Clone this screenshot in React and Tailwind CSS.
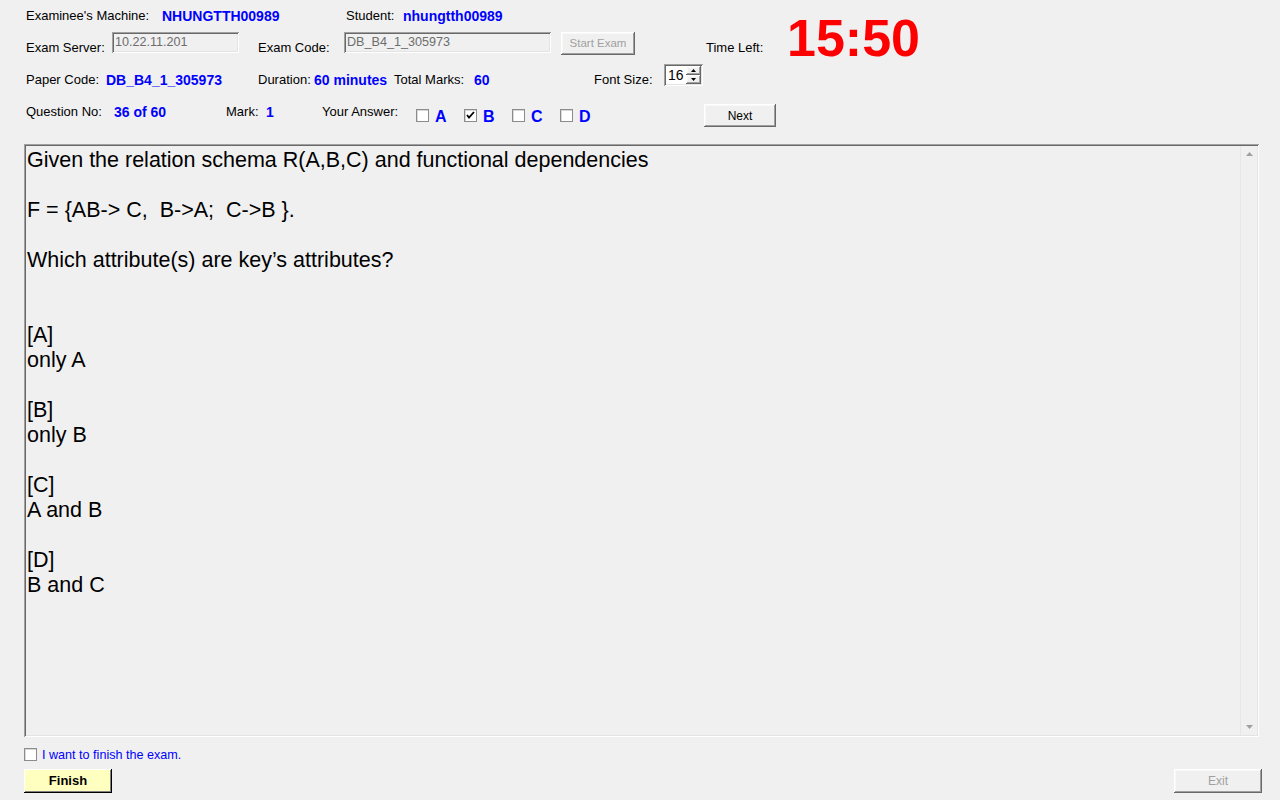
import React from "react";

const F = { fontFamily: '"Liberation Sans", Arial, sans-serif' };

function Label({ w, children, cls = "" }) {
  return (
    <div className={`shrink-0 text-[13px] leading-[16px] text-black whitespace-nowrap ${cls}`} style={w ? { width: w } : undefined}>
      {children}
    </div>
  );
}
function Val({ w, children, cls = "" }) {
  return (
    <div className={`shrink-0 text-[14px] font-bold leading-[16px] text-[#0000ff] whitespace-nowrap ${cls}`} style={w ? { width: w } : undefined}>
      {children}
    </div>
  );
}

function Box({ checked, cls = "" }) {
  return (
    <div className={`shrink-0 w-[13px] h-[13px] bg-white border border-[#8c8c8c] shadow-[inset_1px_1px_#d8d8d8] flex items-center justify-center ${cls}`}>
      {checked && (
        <svg width="9" height="9" viewBox="0 0 9 9">
          <path d="M1 4 L3 6.5 L8 1" fill="none" stroke="#000" strokeWidth="1.8" />
        </svg>
      )}
    </div>
  );
}

const btnShadow =
  "shadow-[inset_-1px_-1px_#696969,inset_1px_1px_#ffffff,inset_-2px_-2px_#a0a0a0,inset_2px_2px_#f8f8f8]";
const sunken =
  "shadow-[inset_1px_1px_#a0a0a0,inset_-1px_-1px_#ffffff,inset_2px_2px_#696969,inset_-2px_-2px_#e3e3e3]";

const LINES = [
  "Given the relation schema R(A,B,C) and functional dependencies",
  "",
  "F = {AB-> C,  B->A;  C->B }.",
  "",
  "Which attribute(s) are key\u2019s attributes?",
  "",
  "",
  "[A]",
  "only A",
  "",
  "[B]",
  "only B",
  "",
  "[C]",
  "A and B",
  "",
  "[D]",
  "B and C",
];

export default function App() {
  return (
    <div className="w-full h-screen bg-[#f0f0f0] overflow-hidden select-none" style={F}>
      {/* header */}
      <div className="flex pt-[8px]">
        <div className="w-[782px] shrink-0 pl-[26px]">
          {/* row 1 */}
          <div className="flex items-center h-[16px]">
            <Label w={136}>Examinee's Machine:</Label>
            <Val w={184}>NHUNGTTH00989</Val>
            <Label w={57}>Student:</Label>
            <Val>nhungtth00989</Val>
          </div>
          {/* row 2 */}
          <div className="flex items-start h-[23px] mt-[8px]">
            <Label w={86} cls="mt-[8px]">Exam Server:</Label>
            <div className={`shrink-0 w-[127px] h-[21px] bg-[#f0f0f0] ${sunken} text-[12.6px] leading-[19px] text-[#6d6d6d] pl-[3px] pt-[1px]`}>
              10.22.11.201
            </div>
            <div className="w-[19px] shrink-0" />
            <Label w={86} cls="mt-[8px]">Exam Code:</Label>
            <div className={`shrink-0 w-[207px] h-[21px] bg-[#f0f0f0] ${sunken} text-[12.6px] leading-[19px] text-[#6d6d6d] pl-[3px] pt-[1px]`}>
              DB_B4_1_305973
            </div>
            <div className="w-[10px] shrink-0" />
            <div className={`shrink-0 w-[74px] h-[23px] bg-[#f0f0f0] ${btnShadow} flex items-center justify-center text-[11.5px] text-[#a0a0a0]`}>
              Start Exam
            </div>
            <div className="w-[71px] shrink-0" />
            <Label cls="mt-[8px]">Time Left:</Label>
          </div>
          {/* row 3 */}
          <div className="flex items-start h-[22px] mt-[9px]">
            <Label w={80} cls="mt-[8px]">Paper Code:</Label>
            <Val w={152} cls="mt-[8px]">DB_B4_1_305973</Val>
            <Label w={56} cls="mt-[8px]">Duration:</Label>
            <Val w={80} cls="mt-[8px]">60 minutes</Val>
            <Label w={80} cls="mt-[8px]">Total Marks:</Label>
            <Val w={120} cls="mt-[8px]">60</Val>
            <Label w={70} cls="mt-[8px]">Font Size:</Label>
            <div className={`shrink-0 w-[39px] h-[22px] bg-white ${sunken} flex items-center pl-[4px] pr-[2px]`}>
              <span className="text-[14px] leading-[16px] text-black flex-1">16</span>
              <div className="flex flex-col w-[15px] h-[18px] gap-0">
                <div className={`h-[9px] bg-[#f0f0f0] ${btnShadow} flex items-center justify-center`}>
                  <svg width="5" height="3" viewBox="0 0 5 3"><path d="M2.5 0 L5 3 L0 3Z" fill="#000" /></svg>
                </div>
                <div className={`h-[9px] bg-[#f0f0f0] ${btnShadow} flex items-center justify-center`}>
                  <svg width="5" height="3" viewBox="0 0 5 3"><path d="M0 0 L5 0 L2.5 3Z" fill="#000" /></svg>
                </div>
              </div>
            </div>
          </div>
          {/* row 4 */}
          <div className="flex items-start h-[22px] mt-[18px]">
            <Label w={88}>Question No:</Label>
            <Val w={112}>36 of 60</Val>
            <Label w={40}>Mark:</Label>
            <Val w={56}>1</Val>
            <Label w={94}>Your Answer:</Label>
            <Box cls="mt-[5px]" />
            <div className="w-[6px] shrink-0" />
            <div className="w-[29px] shrink-0 mt-[4px] text-[16px] font-bold leading-[18px] text-[#0000ff]">A</div>
            <Box checked cls="mt-[5px]" />
            <div className="w-[6px] shrink-0" />
            <div className="w-[29px] shrink-0 mt-[4px] text-[16px] font-bold leading-[18px] text-[#0000ff]">B</div>
            <Box cls="mt-[5px]" />
            <div className="w-[6px] shrink-0" />
            <div className="w-[29px] shrink-0 mt-[4px] text-[16px] font-bold leading-[18px] text-[#0000ff]">C</div>
            <Box cls="mt-[5px]" />
            <div className="w-[6px] shrink-0" />
            <div className="w-[125px] shrink-0 mt-[4px] text-[16px] font-bold leading-[18px] text-[#0000ff]">D</div>
            <div className={`shrink-0 w-[72px] h-[23px] bg-[#f0f0f0] ${btnShadow} flex items-center justify-center text-[12px] text-black`}>
              Next
            </div>
          </div>
        </div>
        <div className="ml-[5px] mt-[4px] text-[52px] leading-[52px] font-bold text-[#ff0000] whitespace-nowrap">15:50</div>
      </div>

      {/* question box */}
      <div className={`ml-[24px] mt-[18px] w-[1235px] h-[593px] flex bg-[#f0f0f0] ${sunken}`}>
        <div className="flex-1 pl-[3px] pt-[4px] text-[21.5px] leading-[25px] text-black whitespace-pre">
          {LINES.map((t, i) => (
            <div key={i} className="h-[25px]">{t}</div>
          ))}
        </div>
        <div className="w-[17px] mt-[2px] mb-[2px] mr-[2px] border-l border-[#e6e6e6] bg-[#f0f0f0] flex flex-col justify-between items-center py-[6px]">
          <svg width="7" height="4" viewBox="0 0 7 4"><path d="M3.5 0 L7 4 L0 4Z" fill="#a0a0a0" /></svg>
          <svg width="7" height="4" viewBox="0 0 7 4"><path d="M0 0 L7 0 L3.5 4Z" fill="#a0a0a0" /></svg>
        </div>
      </div>

      {/* finish checkbox */}
      <div className="flex items-center ml-[24px] mt-[11px] h-[13px]">
        <Box />
        <span className="ml-[5px] text-[12.6px] leading-[16px] text-[#0000ff]">I want to finish the exam.</span>
      </div>

      {/* buttons */}
      <div className="flex justify-between mt-[8px] pl-[24px] pr-[18px]">
        <div className="w-[88px] h-[24px] bg-[#ffffc0] shadow-[inset_-1px_-1px_#000000,inset_1px_1px_#ffffff,inset_-2px_-2px_#808080] flex items-center justify-center text-[13px] font-bold text-black">
          Finish
        </div>
        <div className={`w-[88px] h-[24px] bg-[#f0f0f0] ${btnShadow} flex items-center justify-center text-[12px] text-[#a0a0a0]`}>
          Exit
        </div>
      </div>
    </div>
  );
}
